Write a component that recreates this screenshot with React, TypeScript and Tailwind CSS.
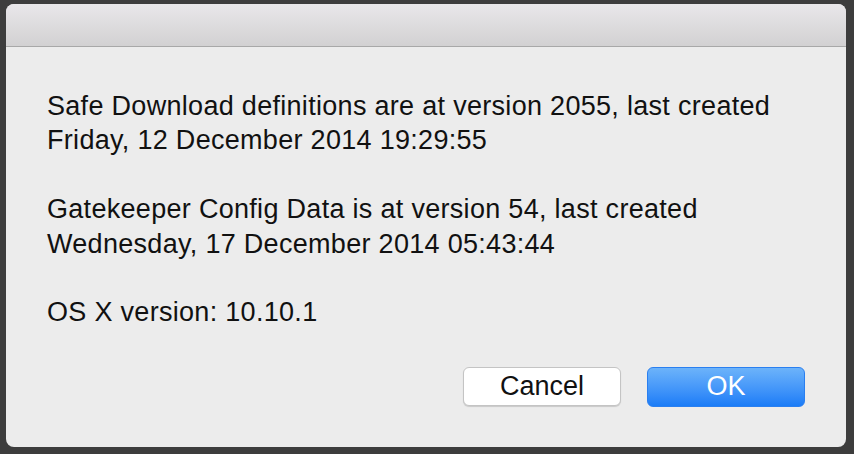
export default function App() {
  return (
    <div className="w-[854px] h-[454px] bg-[#3d3d3d] pt-[4px] pl-[6px]" style={{ fontFamily: '"Liberation Sans", Arial, sans-serif' }}>
      <div className="w-[840px] h-[443px] rounded-[8px] overflow-hidden bg-[#ececec] flex flex-col">
        <div className="h-[43px] bg-gradient-to-b from-[#e9e7ea] to-[#d2d1d2] border-b border-[#a8a8a8] shrink-0" />
        <div className="flex-1 pl-[41px] pr-[30px] pt-[42px] text-[27px] leading-[34.4px] tracking-[0.3px] text-[#111]">
          <p>Safe Download definitions are at version 2055, last created<br />Friday, 12 December 2014 19:29:55</p>
          <p className="mt-[34.4px]">Gatekeeper Config Data is at version 54, last created<br />Wednesday, 17 December 2014 05:43:44</p>
          <p className="mt-[34.4px]">OS X version: 10.10.1</p>
          <div className="flex justify-end gap-[26px] mt-[37px] pr-[11px]">
            <button className="w-[158px] h-[39px] rounded-[6px] bg-white border border-[#c4c4c4] shadow-[0_1px_1px_rgba(0,0,0,0.15)] text-[27px] tracking-normal text-[#111] leading-none">Cancel</button>
            <button className="w-[158px] h-[40px] rounded-[6px] bg-gradient-to-b from-[#6cb3fa] to-[#1a7cf7] border border-[#2a7ff0] text-[27px] tracking-normal text-white leading-none">OK</button>
          </div>
        </div>
      </div>
    </div>
  );
}
